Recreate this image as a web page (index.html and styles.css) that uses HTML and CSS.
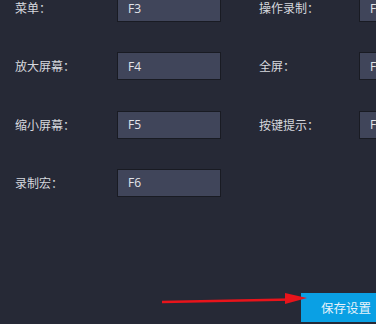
FILE: index.html
```html
<!DOCTYPE html>
<html lang="zh-CN">
<head>
<meta charset="utf-8">
<link rel="stylesheet" href="styles.css">
</head>
<body>
<div class="panel">
  <div class="grid">
    <div class="label">菜单：</div>
    <div class="field">F3</div>
    <div></div>
    <div class="label">操作录制：</div>
    <div class="field">F7</div>

    <div class="label">放大屏幕：</div>
    <div class="field">F4</div>
    <div></div>
    <div class="label">全屏：</div>
    <div class="field">F8</div>

    <div class="label">缩小屏幕：</div>
    <div class="field">F5</div>
    <div></div>
    <div class="label">按键提示：</div>
    <div class="field">F9</div>

    <div class="label">录制宏：</div>
    <div class="field">F6</div>
  </div>
  <div class="footer">
    <button class="save">保存设置</button>
  </div>
  <svg class="arrow" width="160" height="20" viewBox="0 0 160 20">
    <line x1="2" y1="12" x2="132" y2="9.5" stroke="#e8141b" stroke-width="2.4"/>
    <polygon points="125,3 147,8 125,14" fill="#e8141b"/>
  </svg>
</div>
</body>
</html>
```
FILE: styles.css
```css
html, body {
  margin: 0;
  padding: 0;
  background: #262936;
  overflow: hidden;
  width: 376px;
  height: 324px;
}
.panel {
  position: relative;
  width: 376px;
  height: 324px;
  font-family: "Noto Sans CJK SC", "Noto Sans", sans-serif;
  font-size: 12px;
  color: #d6d8de;
}
.grid {
  display: grid;
  grid-template-columns: 102px 104px 38px 100px 104px;
  grid-auto-rows: 28px;
  row-gap: 30.33px;
  padding-left: 15px;
  margin-top: -6px;
  width: 500px;
}
.label {
  display: flex;
  align-items: center;
  line-height: 1;
}
.field {
  box-sizing: border-box;
  border: 1px solid #191b23;
  background: #40455a;
  color: #e2e4ea;
  display: flex;
  align-items: center;
  padding-left: 10px;
  font-family: "Open Sans", "Noto Sans", sans-serif;
  font-size: 12px;
}
.footer {
  display: flex;
  padding-left: 301px;
  margin-top: 96px;
}
.save {
  flex: none;
  width: 92px;
  height: 29px;
  border: none;
  margin: 0;
  padding: 0 0 0 20px;
  text-align: left;
  background: #0aa0e4;
  color: #e6f2fa;
  font-family: "Noto Sans CJK SC", sans-serif;
  font-size: 12.5px;
}
.arrow {
  position: absolute;
  left: 160px;
  top: 296px;
}
```
